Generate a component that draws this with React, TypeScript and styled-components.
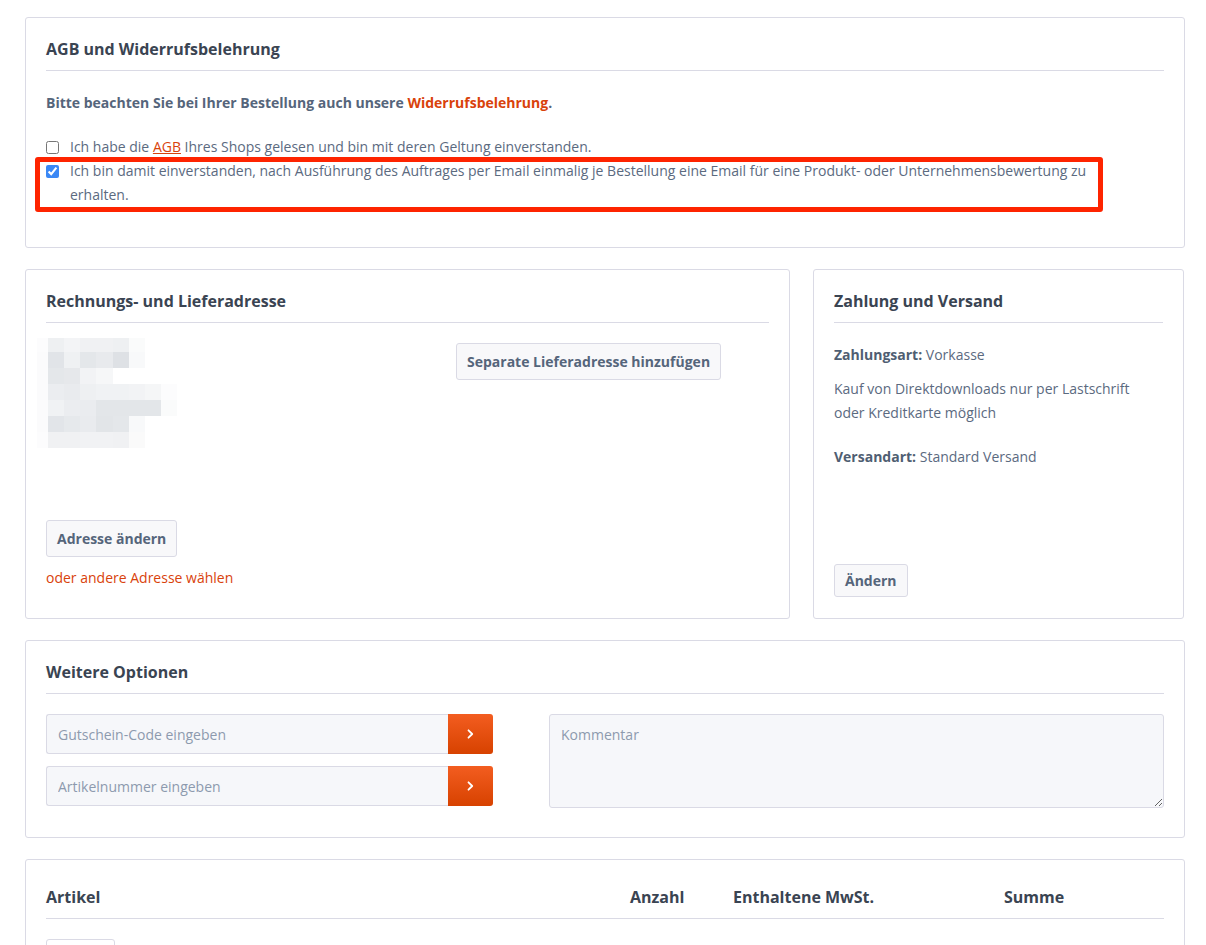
import React from "react";
import styled, { createGlobalStyle } from "styled-components";

const GlobalStyle = createGlobalStyle`
  *, *::before, *::after { box-sizing: border-box; }
  body {
    margin: 0;
    background: #ffffff;
    font-family: "Open Sans", "Noto Sans", Arial, sans-serif;
    color: #5b6a7f;
    font-size: 14px;
  }
`;

const Page = styled.main`
  width: 1206px;
  padding: 17px 21px 40px 25px;
  display: flex;
  flex-direction: column;
  gap: 21px;
`;

const Card = styled.section<{ $flex?: boolean }>`
  border: 1px solid #dadae5;
  border-radius: 3px;
  background: #fff;
  padding: 19px 20px 20px;
  ${(p) => (p.$flex ? "display: flex; flex-direction: column;" : "")}
`;

const CardTitle = styled.h2`
  margin: 0;
  font-size: 16px;
  line-height: 24px;
  font-weight: 700;
  color: #3a4452;
  padding-bottom: 9px;
  border-bottom: 1px solid #dadae5;
`;

const CardBody = styled.div<{ $pt?: number; $pb?: number; $flex?: boolean }>`
  padding-top: ${(p) => p.$pt ?? 20}px;
  padding-bottom: ${(p) => p.$pb ?? 0}px;
  ${(p) => (p.$flex ? "flex: 1; display: flex; flex-direction: column;" : "")}
`;

const Notice = styled.p`
  margin: 0 0 20px;
  font-weight: 700;
  line-height: 24px;
  color: #55657b;
`;

const StrongLink = styled.a`
  color: #d9420b;
  text-decoration: none;
  font-weight: 700;
`;

const InlineLink = styled.a`
  color: #d9420b;
  text-decoration: underline;
`;

const CheckRow = styled.label<{ $highlight?: boolean }>`
  position: relative;
  display: flex;
  align-items: flex-start;
  gap: 11px;
  line-height: 24px;
  color: #5b6a7f;
  ${(p) =>
    p.$highlight
      ? `
    &::after {
      content: "";
      position: absolute;
      top: -2px;
      left: -11px;
      width: 1068px;
      height: 55px;
      border: 5px solid #fe2400;
      border-radius: 3px;
      pointer-events: none;
    }
  `
      : ""}
`;

const CheckBox = styled.input.attrs({ type: "checkbox" })`
  width: 13px;
  height: 13px;
  margin: 6px 0 0;
  flex: none;
  accent-color: #3b88f5;
`;

const CheckText = styled.span`
  max-width: 1030px;
`;

const Row = styled.div`
  display: grid;
  grid-template-columns: 765px 371px;
  gap: 23px;
`;

const AddressGrid = styled.div`
  display: grid;
  grid-template-columns: 410px 1fr;
  height: 177px;
`;

const Pixelated = styled.svg`
  display: block;
  margin: -5px 0 0 -9px;
`;

const Button = styled.button<{ $small?: boolean }>`
  align-self: flex-start;
  height: ${(p) => (p.$small ? 33 : 37)}px;
  padding: 0 10px;
  border: 1px solid #dadae5;
  border-radius: 3px;
  background: #f8f8fa;
  font-family: inherit;
  font-size: 14px;
  font-weight: 700;
  color: #55657b;
  cursor: pointer;
  white-space: nowrap;
`;

const TextLink = styled.a`
  display: block;
  margin-top: 9px;
  margin-bottom: 8px;
  line-height: 24px;
  color: #d9420b;
  text-decoration: none;
`;

const InfoLine = styled.p<{ $mt?: number }>`
  margin: ${(p) => p.$mt ?? 0}px 0 0;
  max-width: 305px;
  line-height: 24px;
  color: #5b6a7f;
`;

const Label = styled.strong`
  font-weight: 700;
  color: #4f5e72;
`;

const BottomButtonWrap = styled.div`
  margin-top: auto;
  margin-bottom: 1px;
`;

const OptionsGrid = styled.div`
  display: grid;
  grid-template-columns: 447px 1fr;
  gap: 56px;
  padding-bottom: 9px;
`;

const InputStack = styled.div`
  display: flex;
  flex-direction: column;
  gap: 12px;
`;

const InputGroup = styled.div`
  display: flex;
  height: 40px;
`;

const TextInput = styled.input`
  flex: 1;
  min-width: 0;
  height: 40px;
  padding: 0 11px;
  border: 1px solid #dadae5;
  border-right: none;
  border-radius: 3px 0 0 3px;
  background: #f6f7fa;
  font-family: inherit;
  font-size: 14px;
  color: #5b6a7f;
  &::placeholder { color: #8d9aae; }
`;

const GoButton = styled.button`
  width: 45px;
  height: 40px;
  border: none;
  border-radius: 0 3px 3px 0;
  background: linear-gradient(#f35d20, #d74200);
  display: flex;
  align-items: center;
  justify-content: center;
  cursor: pointer;
`;

const CommentArea = styled.textarea`
  width: 100%;
  height: 94px;
  padding: 10px 11px;
  border: 1px solid #dadae5;
  border-radius: 3px;
  background: #f6f7fa;
  font-family: inherit;
  font-size: 14px;
  line-height: 20px;
  color: #5b6a7f;
  resize: vertical;
  &::placeholder { color: #8d9aae; }
`;

const TableHead = styled.div`
  display: grid;
  grid-template-columns: 584px 103px 271px 1fr;
  padding: 6px 0 9px;
  border-bottom: 1px solid #dadae5;
`;

const HeadCell = styled.div`
  font-size: 16px;
  line-height: 24px;
  font-weight: 700;
  color: #3a4452;
`;

const ItemRow = styled.div`
  display: flex;
  gap: 15px;
  padding-top: 20px;
`;

const Thumb = styled.div`
  width: 69px;
  height: 69px;
  border: 1px solid #dadae5;
  border-radius: 3px;
`;

const pixCols = [0, 11, 27, 43, 59, 76, 92, 108, 124, 140];
const pixRows = [0, 14, 30, 46, 62, 78, 94, 110];
const W = "#ffffff";
const pixColors = [
  ["#fcfcfd", "#eef0f2", "#f3f4f6", "#f0f1f3", "#f0f1f3", "#eef0f2", "#fafbfb", W, W],
  ["#fbfbfc", "#e1e4e8", "#eff1f3", "#e4e7ea", "#e8eaed", "#dee1e5", "#f8f9fa", W, W],
  ["#fbfbfc", "#e4e7ea", "#e6e8eb", "#f2f3f5", "#f6f7f8", W, W, W, W],
  ["#fbfbfc", "#ebedf0", "#e9ebee", "#eef0f2", "#f0f2f4", "#f0f2f4", "#f2f3f5", "#f5f6f7", "#fcfcfd"],
  ["#fbfbfc", "#f0f2f4", "#ebedf0", "#eaecef", "#e3e6e9", "#e3e6e9", "#e3e6e9", "#e3e6e9", "#fafbfb"],
  ["#fbfbfc", "#e2e5e9", "#e6e9ec", "#e9ebee", "#e2e5e8", "#e4e7ea", "#f8f9fa", W, W],
  ["#fcfcfd", "#f0f1f3", "#f0f1f3", "#f1f2f4", "#f1f2f4", "#f0f1f3", "#fafafa", W, W],
];

const BlurredAddress = () => (
  <Pixelated width={140} height={110} viewBox="0 0 140 110" aria-hidden="true">
    {pixColors.map((row, r) =>
      row.map((c, ci) =>
        c === W ? null : (
          <rect
            key={`${r}-${ci}`}
            x={pixCols[ci]}
            y={pixRows[r]}
            width={pixCols[ci + 1] - pixCols[ci]}
            height={pixRows[r + 1] - pixRows[r]}
            fill={c}
          />
        )
      )
    )}
  </Pixelated>
);

const Chevron = () => (
  <svg width="7" height="10" viewBox="0 0 7 10" aria-hidden="true">
    <polyline points="1.5,1.3 5.2,5 1.5,8.7" fill="none" stroke="#ffffff" strokeWidth="1.8" strokeLinecap="round" strokeLinejoin="round" />
  </svg>
);

export default function App() {
  return (
    <>
      <GlobalStyle />
      <Page>
        <Card>
          <CardTitle>AGB und Widerrufsbelehrung</CardTitle>
          <CardBody $pt={20} $pb={20}>
            <Notice>
              Bitte beachten Sie bei Ihrer Bestellung auch unsere{" "}
              <StrongLink href="#">Widerrufsbelehrung</StrongLink>.
            </Notice>
            <CheckRow>
              <CheckBox />
              <span>
                Ich habe die <InlineLink href="#">AGB</InlineLink> Ihres Shops gelesen und bin mit deren Geltung einverstanden.
              </span>
            </CheckRow>
            <CheckRow $highlight>
              <CheckBox defaultChecked />
              <CheckText>
                Ich bin damit einverstanden, nach Ausführung des Auftrages per Email einmalig je Bestellung eine Email für eine Produkt- oder Unternehmensbewertung zu erhalten.
              </CheckText>
            </CheckRow>
          </CardBody>
        </Card>

        <Row>
          <Card>
            <CardTitle>Rechnungs- und Lieferadresse</CardTitle>
            <CardBody>
              <AddressGrid>
                <div>
                  <BlurredAddress />
                </div>
                <div>
                  <Button>Separate Lieferadresse hinzufügen</Button>
                </div>
              </AddressGrid>
              <Button>Adresse ändern</Button>
              <TextLink href="#">oder andere Adresse wählen</TextLink>
            </CardBody>
          </Card>

          <Card $flex>
            <CardTitle>Zahlung und Versand</CardTitle>
            <CardBody $flex>
              <InfoLine>
                <Label>Zahlungsart:</Label> Vorkasse
              </InfoLine>
              <InfoLine $mt={10}>
                Kauf von Direktdownloads nur per Lastschrift oder Kreditkarte möglich
              </InfoLine>
              <InfoLine $mt={20}>
                <Label>Versandart:</Label> Standard Versand
              </InfoLine>
              <BottomButtonWrap>
                <Button $small>Ändern</Button>
              </BottomButtonWrap>
            </CardBody>
          </Card>
        </Row>

        <Card>
          <CardTitle>Weitere Optionen</CardTitle>
          <CardBody>
            <OptionsGrid>
              <InputStack>
                <InputGroup>
                  <TextInput placeholder="Gutschein-Code eingeben" />
                  <GoButton aria-label="Gutschein einlösen">
                    <Chevron />
                  </GoButton>
                </InputGroup>
                <InputGroup>
                  <TextInput placeholder="Artikelnummer eingeben" />
                  <GoButton aria-label="Artikel hinzufügen">
                    <Chevron />
                  </GoButton>
                </InputGroup>
              </InputStack>
              <CommentArea placeholder="Kommentar" />
            </OptionsGrid>
          </CardBody>
        </Card>

        <Card>
          <TableHead>
            <HeadCell>Artikel</HeadCell>
            <HeadCell>Anzahl</HeadCell>
            <HeadCell>Enthaltene MwSt.</HeadCell>
            <HeadCell>Summe</HeadCell>
          </TableHead>
          <ItemRow>
            <Thumb />
          </ItemRow>
        </Card>
      </Page>
    </>
  );
}
